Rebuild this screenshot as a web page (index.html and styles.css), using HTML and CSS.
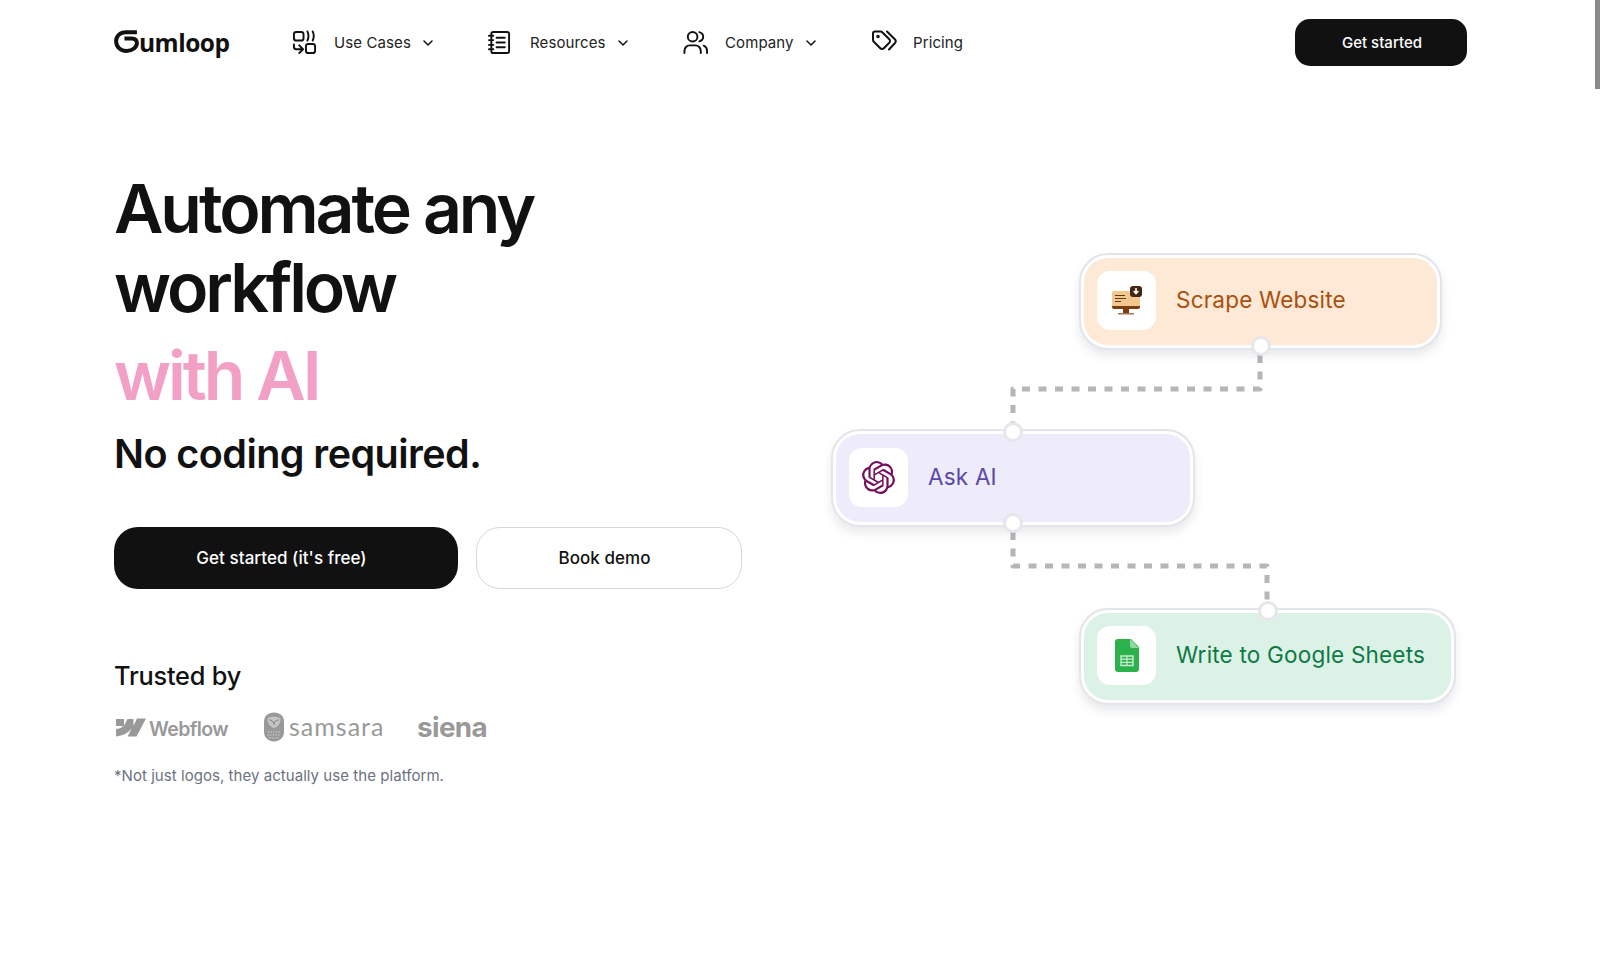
FILE: index.html
```html
<!DOCTYPE html>
<html lang="en">
<head>
<meta charset="utf-8">
<title>Gumloop</title>
<link rel="stylesheet" href="styles.css">
</head>
<body>
<div class="scroll-thumb"></div>
<header class="header">
  <a class="logo">
    <svg class="logo-g" viewBox="0 0 24 23" fill="none" stroke="#111" stroke-width="3.800" stroke-linecap="butt" stroke-linejoin="round"><path d="M22 3H11.500C5.500 3 2 7 2 11.500C2 17 6 21 12 21C18 21 22 17.500 22 13.500C22 10.500 20 9 17 9H10"/></svg><span>umloop</span>
  </a>
  <nav class="nav">
    <a class="nav-item nav-cases">
      <svg class="nav-icon" viewBox="0 0 26 26" fill="none" stroke="#111" stroke-width="2" stroke-linecap="round" stroke-linejoin="round"><rect x="2" y="2" width="10" height="9" rx="2.500"/><rect x="14.500" y="14.500" width="9.500" height="9.500" rx="2.500"/><path d="M16 1.500c1.500 2.500 1.500 7 0 9.500M21.500 1.500c1.500 2.500 1.500 7 0 9.500M2 15v2.500c0 1.500 1 2.500 2.500 2.500H11M7.500 16l4 4-4 4"/></svg>
      <span>Use Cases</span>
      <svg class="chev" viewBox="0 0 12 8" fill="none" stroke="#111" stroke-width="1.500" stroke-linecap="round" stroke-linejoin="round"><path d="M2 2l4 4 4-4"/></svg>
    </a>
    <a class="nav-item nav-res">
      <svg class="nav-icon" viewBox="0 0 24 26" fill="none" stroke="#111" stroke-width="2" stroke-linecap="round" stroke-linejoin="round"><rect x="3.500" y="2" width="18.500" height="22" rx="2"/><path d="M9 8h8.500M9 13h8.500M9 18h8.500M1 6h4.500M1 10.500h4.500M1 15.500h4.500M1 20h4.500"/></svg>
      <span>Resources</span>
      <svg class="chev" viewBox="0 0 12 8" fill="none" stroke="#111" stroke-width="1.500" stroke-linecap="round" stroke-linejoin="round"><path d="M2 2l4 4 4-4"/></svg>
    </a>
    <a class="nav-item nav-comp">
      <svg class="nav-icon" viewBox="0 0 26 26" fill="none" stroke="#111" stroke-width="2" stroke-linecap="round" stroke-linejoin="round"><circle cx="10" cy="7" r="5"/><path d="M1.500 24v-2.500c0-3 2.500-5.500 5.500-5.500h6c3 0 5.500 2.500 5.500 5.500V24M17 2.200c2.500.8 4 2.700 4 4.800s-1.500 4-4 4.800M21.500 16.300c2 .8 3.500 2.800 3.500 5.200v2.500"/></svg>
      <span>Company</span>
      <svg class="chev" viewBox="0 0 12 8" fill="none" stroke="#111" stroke-width="1.500" stroke-linecap="round" stroke-linejoin="round"><path d="M2 2l4 4 4-4"/></svg>
    </a>
    <a class="nav-item nav-price">
      <svg class="nav-icon-wide" viewBox="0 0 27 22" fill="none" stroke="#111" stroke-width="2" stroke-linecap="round" stroke-linejoin="round"><path d="M2 3.500C2 2.500 2.800 1.500 4 1.500h5.500c.7 0 1.300.3 1.800.8l7 7c1 1 1 2.500 0 3.500l-5.500 5.500c-1 1-2.500 1-3.500 0l-7-7C2.300 10.300 2 9.700 2 9z"/><circle cx="7" cy="6.500" r=".8"/><path d="M16 1.500l7.800 7.800c1.200 1.200 1.200 2.700 0 4L18 19.500"/></svg>
      <span>Pricing</span>
    </a>
  </nav>
  <a class="header-cta">Get started</a>
</header>

<main class="hero">
  <section class="copy">
    <h1 class="headline">Automate any<br>workflow</h1>
    <div class="headline headline-pink">with AI</div>
    <p class="sub">No coding required.</p>
    <div class="actions">
      <a class="btn btn-dark">Get started (it's free)</a>
      <a class="btn btn-light">Book demo</a>
    </div>
    <h2 class="trusted">Trusted by</h2>
    <div class="logos">
      <div class="brand brand-webflow">
        <svg class="wf-mark" viewBox="0 0 30 19" fill="#999"><path d="M30 0.500L20.500 18.500H11.600L15.500 10.800H15.300C12 15 7.200 17.800 0 18.500V11C0 11 4.500 10.700 7.200 7.900H0V1H8V7.500H8.200L11.500 1H17.500V7.400H17.700L21 .5z"/></svg>
        <span>Webflow</span>
      </div>
      <div class="brand brand-samsara">
        <svg class="owl" viewBox="0 0 22 30"><path fill="#999" d="M11 .5c6 0 10 3.500 10 9.500v10c0 5.500-4.500 9.500-10 9.500S1 25.500 1 20V10C1 4 5 .5 11 .5z"/><path fill="#c4c4c4" d="M4.500 6.500c3-2.500 10-2.500 13 0 .5 4-2.500 8.500-6.500 9.500C7 15 4 10.500 4.500 6.500z"/><path fill="none" stroke="#777" stroke-width="1" d="M6.500 8c1.500 0 3 .8 4.500 3 1.500-2.200 3-3 4.500-3M11 11v2"/><path fill="none" stroke="#ddd" stroke-width="1.200" stroke-dasharray="1.200 1.500" d="M5 20h12M4.500 23h13M6 26h10"/></svg>
        <span>samsara</span>
      </div>
      <div class="brand brand-siena">siena</div>
    </div>
    <p class="note">*Not just logos, they actually use the platform.</p>
  </section>

  <section class="diagram">
    <svg class="wires" viewBox="0 0 800 600" fill="none" stroke="#b5b5ba" stroke-width="5" stroke-dasharray="8 8.500" stroke-linejoin="round">
      <path d="M427 269V303H180V337"/>
      <path d="M180 446V480H434V514"/>
    </svg>
    <article class="node node-scrape">
      <div class="node-inner">
        <div class="node-icon">
          <svg class="ic" viewBox="0 0 32 30"><rect x="1" y="6" width="28" height="17" rx="2" fill="#f3c78d"/><path d="M1 21h28v1a2 2 0 0 1-2 2H3a2 2 0 0 1-2-2z" fill="#7a3d14"/><rect x="12" y="24" width="6" height="4" fill="#7a3d14"/><rect x="7" y="28" width="16" height="1.500" fill="#a8764e"/><path d="M4 10.500h10M4 13.500h11M4 16.500h6" stroke="#5d3a1a" stroke-width="1.200"/><rect x="19" y="1" width="12" height="11" rx="3" fill="#3f2615"/><path d="M25 3v4.500M22.700 6l2.300 2.500L27.300 6" stroke="#fff" stroke-width="1.600" fill="none"/></svg>
        </div>
        <span class="node-label">Scrape Website</span>
      </div>
      <i class="port port-bottom"></i>
    </article>
    <article class="node node-ai">
      <div class="node-inner">
        <div class="node-icon">
          <svg class="ic-ai" viewBox="0 0 24 24" fill="#750e5c"><path d="M22.2819 9.8211a5.9847 5.9847 0 0 0-.5157-4.9108 6.0462 6.0462 0 0 0-6.5098-2.9A6.0651 6.0651 0 0 0 4.9807 4.1818a5.9847 5.9847 0 0 0-3.9977 2.9 6.0462 6.0462 0 0 0 .7427 7.0966 5.98 5.98 0 0 0 .511 4.9107 6.051 6.051 0 0 0 6.5146 2.9001A5.9847 5.9847 0 0 0 13.2599 24a6.0557 6.0557 0 0 0 5.7718-4.2058 5.9894 5.9894 0 0 0 3.9977-2.9001 6.0557 6.0557 0 0 0-.7475-7.0729zm-9.022 12.6081a4.4755 4.4755 0 0 1-2.8764-1.0408l.1419-.0804 4.7783-2.7582a.7948.7948 0 0 0 .3927-.6813v-6.7369l2.02 1.1686a.071.071 0 0 1 .038.052v5.5826a4.504 4.504 0 0 1-4.4945 4.4944zm-9.6607-4.1254a4.4708 4.4708 0 0 1-.5346-3.0137l.142.0852 4.783 2.7582a.7712.7712 0 0 0 .7806 0l5.8428-3.3685v2.3324a.0804.0804 0 0 1-.0332.0615L9.74 19.9502a4.4992 4.4992 0 0 1-6.1408-1.6464zM2.3408 7.8956a4.485 4.485 0 0 1 2.3655-1.9728V11.6a.7664.7664 0 0 0 .3879.6765l5.8144 3.3543-2.0201 1.1685a.0757.0757 0 0 1-.071 0l-4.8303-2.7865A4.504 4.504 0 0 1 2.3408 7.872zm16.5963 3.8558L13.1038 8.364 15.1192 7.2a.0757.0757 0 0 1 .071 0l4.8303 2.7913a4.4944 4.4944 0 0 1-.6765 8.1042v-5.6772a.79.79 0 0 0-.407-.667zm2.0107-3.0231l-.142-.0852-4.7735-2.7818a.7759.7759 0 0 0-.7854 0L9.409 9.2297V6.8974a.0662.0662 0 0 1 .0284-.0615l4.8303-2.7866a4.4992 4.4992 0 0 1 6.6802 4.66zM8.3065 12.863l-2.02-1.1638a.0804.0804 0 0 1-.038-.0567V6.0742a4.4992 4.4992 0 0 1 7.3757-3.4537l-.142.0805L8.704 5.459a.7948.7948 0 0 0-.3927.6813zm1.0976-2.3654l2.602-1.4998 2.6069 1.4998v2.9994l-2.5974 1.4997-2.6067-1.4997Z"/></svg>
        </div>
        <span class="node-label">Ask AI</span>
      </div>
      <i class="port port-top"></i>
      <i class="port port-bottom"></i>
    </article>
    <article class="node node-sheets">
      <div class="node-inner">
        <div class="node-icon">
          <svg class="ic-sheet" viewBox="0 0 24 33"><path d="M3 0h13l8 8v22a3 3 0 0 1-3 3H3a3 3 0 0 1-3-3V3a3 3 0 0 1 3-3z" fill="#2bb24c"/><path d="M15 0l9 9h-7a2 2 0 0 1-2-2z" fill="#8fd8a3"/><path d="M6 17h12v9.500H6z" fill="none" stroke="#c8ecd2" stroke-width="1.400"/><path d="M6 20.200h12M6 23.400h12M12 17v9.500" stroke="#c8ecd2" stroke-width="1.200"/></svg>
        </div>
        <span class="node-label">Write to Google Sheets</span>
      </div>
      <i class="port port-top"></i>
    </article>
  </section>
</main>
</body>
</html>
```

FILE: styles.css
```css
* { box-sizing: border-box; }
html, body { margin: 0; height: 956px; overflow: hidden; background: #fff; }
body { font-family: Inter, "Liberation Sans", sans-serif; color: #111; position: relative; }
a { color: inherit; text-decoration: none; }

.scroll-thumb { position: absolute; right: 0; top: 0; width: 5px; height: 89px; background: #8a8a8a; z-index: 5; }

.header { height: 86px; padding: 19px 133px 0 114px; display: flex; align-items: flex-start; }
.logo { display: flex; align-items: center; width: 178px; height: 46px; font-family: "Open Sans", Inter, sans-serif; font-weight: 700; font-size: 24.5px; letter-spacing: -0.5px; color: #111; }
.logo-g { width: 25px; height: 24px; flex: none; margin-top: -3px; }
.logo span { margin-left: 0; }

.nav { display: flex; height: 47px; align-items: center; }
.nav-item { display: flex; align-items: center; font-size: 15px; letter-spacing: 0.1px; color: #222; }
.nav-icon { width: 25px; height: 25px; flex: none; margin-right: 17px; }
.nav-icon-wide { width: 27px; height: 22px; flex: none; margin-right: 15px; margin-top: -4px; }
.chev { width: 12px; height: 8px; margin-left: 11px; flex: none; }
.nav-cases { width: 196px; }
.nav-res { width: 195px; }
.nav-res .nav-icon { margin-right: 19px; width: 23px; }
.nav-comp { width: 188px; }

.header-cta { margin-left: auto; width: 172px; height: 47px; padding-left: 2px; background: #111; color: #fff; border-radius: 15px; display: flex; align-items: center; justify-content: center; font-size: 15px; font-weight: 500; }

.hero { display: flex; padding-left: 114px; }
.copy { width: 719px; flex: none; padding-top: 83px; }
.headline { margin: 0; font-size: 68px; font-weight: 600; line-height: 79px; letter-spacing: -3.1px; color: #111; }
.headline-pink { color: #f2a0c5; margin-top: 9px; }
.sub { margin: 11px 0 0; font-size: 39.5px; font-weight: 600; line-height: 56px; letter-spacing: -0.55px; color: #111; }

.actions { display: flex; gap: 18px; margin-top: 45px; }
.btn { height: 62px; border-radius: 24px; display: flex; align-items: center; justify-content: center; font-size: 17px; font-weight: 500; letter-spacing: 0.05px; }
.btn-dark { width: 344px; padding-right: 9px; background: #111; color: #fff; }
.btn-light { width: 266px; padding-right: 9px; border: 1px solid #d8d8d8; color: #111; background: #fff; }

.trusted { margin: 71px 0 0; font-size: 25.3px; line-height: 32px; font-weight: 500; letter-spacing: -0.2px; color: #111; }

.logos { display: flex; align-items: center; margin-top: 19px; height: 32px; color: #999; }
.brand { display: flex; align-items: center; }
.brand-webflow { width: 149px; padding-left: 2px; font-size: 19.5px; font-weight: 600; letter-spacing: -0.6px; }
.brand-webflow span { margin-top: 3px; }
.wf-mark { width: 30px; height: 19px; margin-right: 3px; }
.brand-samsara { width: 154px; font-family: Lato, sans-serif; font-size: 25px; letter-spacing: 1px; }
.brand-samsara span { margin-top: -3px; }
.owl { width: 22px; height: 30px; margin-right: 4px; }
.brand-siena { font-size: 27.8px; font-weight: 700; letter-spacing: -0.6px; }

.note { margin: 23px 0 0; font-size: 15px; line-height: 20px; letter-spacing: 0.05px; color: #6b7280; }

.diagram { position: relative; flex: 1; height: 700px; }
.wires { position: absolute; left: 0; top: 0; width: 800px; height: 600px; }
.node { position: absolute; height: 97px; padding: 3px; background: #fff; border: 2px solid #e3e5ea; border-radius: 29px; box-shadow: 0 6px 10px rgba(40, 45, 70, 0.1); }
.node-inner { height: 100%; border-radius: 24px; display: flex; align-items: center; padding: 0 0 3px 13px; }
.node-icon { width: 59px; height: 59px; background: #fff; border-radius: 13px; display: flex; align-items: center; justify-content: center; flex: none; margin-right: 20px; }
.node-label { font-size: 22.5px; line-height: 30px; letter-spacing: 0.2px; }
.ic { width: 32px; height: 30px; }
.ic-ai { width: 33px; height: 33px; }
.ic-sheet { width: 24px; height: 33px; }

.node-scrape { left: 246px; top: 167px; width: 363px; }
.node-scrape .node-inner { background: #fee8d6; }
.node-scrape .node-label { color: #a9500e; }
.node-ai { left: -2px; top: 343px; width: 364px; height: 98px; }
.node-ai .node-inner { background: #eeebfb; padding-bottom: 2px; }
.node-ai .node-label { color: #5b48a6; }
.node-sheets { left: 246px; top: 522px; width: 377px; }
.node-sheets .node-inner { background: #ddf2e6; }
.node-sheets .node-label { color: #0b7a45; }

.port { position: absolute; width: 20px; height: 20px; margin-left: -10px; border-radius: 50%; background: #fff; border: 3.5px solid #e5e7eb; }
.port-bottom { bottom: -8px; left: 50%; }
.port-top { top: -9px; left: 50%; }
```
